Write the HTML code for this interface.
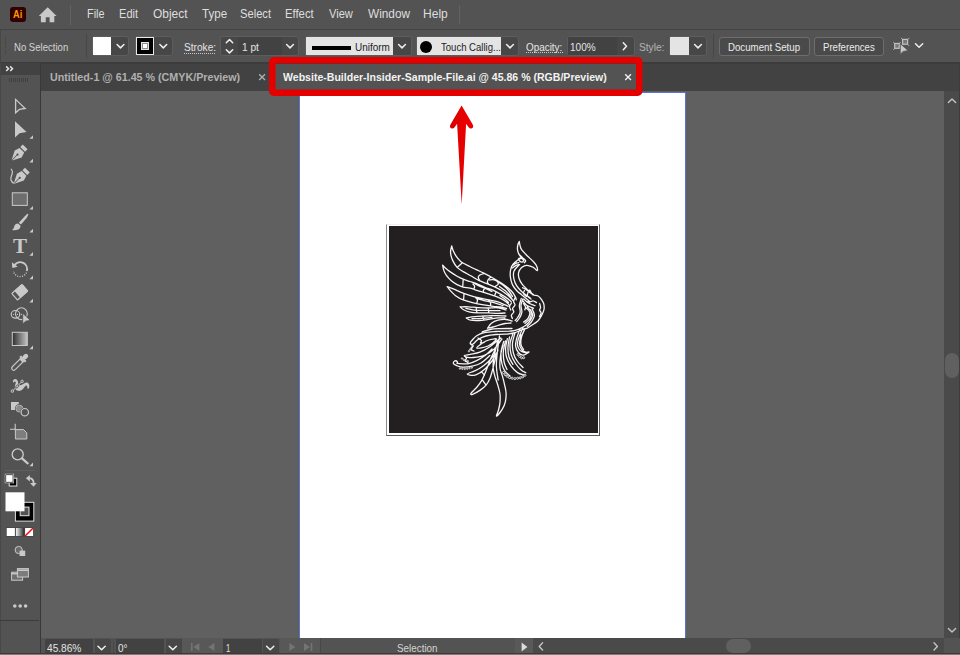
<!DOCTYPE html>
<html lang="en">
<head>
<meta charset="utf-8">
<title>Adobe Illustrator</title>
<style>
html,body{margin:0;padding:0;background:#535353;}
#app{position:relative;width:960px;height:655px;overflow:hidden;background:#535353;font-family:"Liberation Sans",sans-serif;}
#app div,#app svg{position:absolute;}
.t{position:absolute;white-space:pre;line-height:1;transform-origin:0 0;}
.b{box-sizing:border-box;}
</style>
</head>
<body>
<div id="app">
<!-- menu bar -->
<div style="left:0;top:0;width:960px;height:29px;background:#535353"></div>
<div style="left:0;top:29px;width:960px;height:1px;background:#444444"></div>
<!-- control bar -->
<div style="left:0;top:30px;width:960px;height:32px;background:#535353"></div>
<div style="left:0;top:30px;width:1px;height:32px;background:#474747"></div>
<div style="left:0;top:62px;width:960px;height:1.5px;background:#3c3c3c"></div>
<!-- tab strip -->
<div style="left:41px;top:63.5px;width:919px;height:27.5px;background:#424242"></div>
<!-- active tab -->
<div style="left:272px;top:63.5px;width:368px;height:27.5px;background:#535353"></div>
<!-- canvas -->
<div style="left:41px;top:91px;width:903px;height:547px;background:#606060"></div>
<!-- artboard -->
<div style="left:298.5px;top:92px;width:387.5px;height:546px;background:#5675cf"></div>
<div style="left:299.5px;top:93px;width:385.5px;height:545px;background:#ffffff"></div>
<!-- toolbar -->
<div style="left:0;top:63px;width:40px;height:590px;background:#535353"></div>
<div style="left:0;top:63px;width:40px;height:11.5px;background:#424242"></div>
<div style="left:39.5px;top:63px;width:1.5px;height:590px;background:#383838"></div>
<div style="left:0;top:63px;width:1px;height:590px;background:#484848"></div>
<div style="left:0;top:620px;width:39px;height:1px;background:#3c3c3c"></div>
<div style="left:5px;top:470px;width:30px;height:1px;background:#5f5f5f"></div>
<!-- v scrollbar -->
<div style="left:944px;top:91px;width:15px;height:547px;background:#4a4a4a"></div>
<div style="left:959px;top:63px;width:1px;height:592px;background:#3c3c3c"></div>
<div style="left:944.5px;top:353px;width:14.5px;height:25px;border-radius:7px;background:#606060"></div>
<!-- status bar -->
<div style="left:41px;top:638px;width:919px;height:15px;background:#535353"></div>
<div style="left:533px;top:638px;width:411px;height:15px;background:#4a4a4a"></div>
<div style="left:726px;top:638.5px;width:25px;height:14.5px;border-radius:7px;background:#606060"></div>
<div style="left:0;top:653px;width:960px;height:1px;background:#3a3a3a"></div>
<div style="left:0;top:654px;width:960px;height:1px;background:#7c7c7c"></div>
<!-- ===== menu bar icons ===== -->
<div style="left:10px;top:7px;width:15.5px;height:15px;border-radius:3px;background:#330000;z-index:0"></div>
<svg style="left:38px;top:6px" width="20" height="18" viewBox="38 6 20 18"><path d="M47.7 7.2 L56.6 16.1 L54.3 16.1 L54.3 22.3 L49.6 22.3 L49.6 17.2 L45.8 17.2 L45.8 22.3 L40.9 22.3 L40.9 16.1 L38.8 16.1 Z" fill="#c9c9c9"/></svg>
<div style="left:70px;top:5px;width:1px;height:19.5px;background:#626262"></div>
<div style="left:459px;top:5px;width:1px;height:19px;background:#626262"></div>

<!-- ===== control bar ===== -->
<!-- gripper -->
<svg style="left:4px;top:36px" width="4" height="20" viewBox="0 0 4 20"><path d="M1.5 1v18" stroke="#3f3f3f" stroke-width="1" stroke-dasharray="1 1"/></svg>
<div style="left:86px;top:34px;width:1px;height:24px;background:#474747"></div>
<div style="left:713px;top:34px;width:1px;height:24px;background:#474747"></div>

<!-- fill widget -->
<div class="b" style="left:92px;top:36px;width:37px;height:20px;border:1px solid #5d5d5d;border-radius:3px;background:#474747"></div>
<div style="left:93px;top:37px;width:18px;height:18px;background:#ffffff"></div>
<!-- stroke widget -->
<div class="b" style="left:135px;top:36px;width:38px;height:20px;border:1px solid #5d5d5d;border-radius:3px;background:#474747"></div>
<div class="b" style="left:136px;top:37px;width:18px;height:18px;background:#000;border:1px solid #e8e8e8"></div>
<div class="b" style="left:141px;top:42.4px;width:8px;height:7.8px;background:#8e8e8e;border:1px solid #e2e2e2"></div>
<div style="left:143px;top:44.4px;width:4px;height:3.8px;background:#ffffff"></div>
<!-- stroke weight -->
<div class="b" style="left:220px;top:36px;width:79px;height:20px;border:1px solid #5d5d5d;border-radius:3px;background:#474747"></div>
<div style="left:238px;top:37px;width:43.5px;height:18px;background:#424242"></div>
<!-- uniform -->
<div class="b" style="left:304.5px;top:36px;width:107px;height:20px;border:1px solid #5d5d5d;border-radius:3px;background:#474747"></div>
<div style="left:305.5px;top:37px;width:87.5px;height:18px;background:#e4e4e4"></div>
<div style="left:312px;top:45.5px;width:38.6px;height:4px;background:#000"></div>
<!-- brush -->
<div class="b" style="left:416px;top:36px;width:103px;height:20px;border:1px solid #5d5d5d;border-radius:3px;background:#474747"></div>
<div style="left:417px;top:37px;width:84px;height:18px;background:#e4e4e4"></div>
<div style="left:420px;top:40.5px;width:12px;height:12px;border-radius:6px;background:#000"></div>
<!-- opacity -->
<div class="b" style="left:567px;top:36px;width:67.5px;height:20px;border:1px solid #5d5d5d;border-radius:3px;background:#474747"></div>
<div style="left:568px;top:37px;width:48.5px;height:18px;background:#424242"></div>
<!-- style -->
<div class="b" style="left:669px;top:36px;width:38px;height:20px;border:1px solid #5d5d5d;border-radius:3px;background:#474747"></div>
<div style="left:670px;top:37px;width:19px;height:18px;background:#e4e4e4"></div>
<!-- buttons -->
<div class="b" style="left:718.5px;top:36.5px;width:91px;height:19.5px;border:1px solid #6d6d6d;border-radius:3px;background:#4a4a4a"></div>
<div class="b" style="left:814px;top:36.5px;width:69.5px;height:19.5px;border:1px solid #6d6d6d;border-radius:3px;background:#4a4a4a"></div>
<!-- dotted underlines -->
<svg style="left:183px;top:52px" width="34" height="3" viewBox="0 0 34 3"><path d="M1 1.5h31" stroke="#c8c8c8" stroke-width="1" stroke-dasharray="1 1"/></svg>
<svg style="left:525px;top:51px" width="40" height="3" viewBox="0 0 40 3"><path d="M1 1.5h37" stroke="#c8c8c8" stroke-width="1" stroke-dasharray="1 1"/></svg>

<!-- chevrons (control bar) -->
<svg style="left:0;top:30px" width="960" height="32" viewBox="0 30 960 32" fill="none" stroke="#f0f0f0" stroke-width="1.5" stroke-linecap="round" stroke-linejoin="round">
<path d="M117.1 44.55l3.4 3.3 3.4-3.3"/>
<path d="M159.9 44.55l3.4 3.3 3.4-3.3"/>
<path d="M226.3 42.7l3.2-3.2 3.2 3.2"/>
<path d="M226.3 49.7l3.2 3.2 3.2-3.2"/>
<path d="M286.6 44.55l3.4 3.3 3.4-3.3"/>
<path d="M398.6 44.55l3.4 3.3 3.4-3.3"/>
<path d="M506.6 44.55l3.4 3.3 3.4-3.3"/>
<path d="M623.3 42.7l3.2 3.5-3.2 3.500"/>
<path d="M694.6 44.55l3.4 3.3 3.4-3.3"/>
<path d="M915.5 43.800l3.600 3.400 3.600-3.400"/>
</svg>
<!-- ===== left toolbar ===== -->
<svg style="left:0;top:62px" width="40" height="560" viewBox="0 62 40 560">
<g fill="none" stroke="#e6e6e6" stroke-width="1.5" stroke-linejoin="miter">
<path d="M6.2 66.4l2.3 2.3-2.3 2.3M10.2 66.4l2.3 2.3-2.3 2.3"/>
</g>
<path d="M9 80h20" stroke="#414141" stroke-width="4" stroke-dasharray="1 1"/>
<g fill="#c9c9c9">
<!-- flyout triangles -->
<path d="M33 135.2v3.6h-3.6zM33 158.8v3.6h-3.6zM33 206v3.6h-3.6zM33 228.8v3.6h-3.6zM33 252.1v3.6h-3.6zM33 275.6v3.6h-3.6zM33 298.8v3.6h-3.6zM33 345.6v3.6h-3.6zM33 462.6v3.6h-3.6z"/>
</g>
<!-- 1 selection -->
<path d="M15.6 99.4V112.7L19.4 109.4L25.2 108.5Z" fill="none" stroke="#c9c9c9" stroke-width="1.3" stroke-linejoin="miter"/>
<!-- 2 direct selection -->
<path d="M15 121.2V137.5L19.6 133.3L26.6 132Z" fill="#c9c9c9"/>
<!-- 3 pen -->
<g transform="translate(19.1 153) rotate(45)" fill="#c9c9c9">
<path d="M-3.4 -8.6h6.8v3.6h-6.8z"/>
<path d="M-3.3 -3.9h6.6l1.6 5.2L0.4 10.2V3.3a1.1 1.1 0 1 0 -0.8 0V10.2L-4.9 1.3Z"/>
</g>
<!-- 4 curvature -->
<g transform="translate(21.3 176.2) rotate(45)" fill="#c9c9c9">
<path d="M-3.4 -8.6h6.8v3.6h-6.8z"/>
<path d="M-3.3 -3.9h6.6l1.6 5.2L0.4 10.2V3.3a1.1 1.1 0 1 0 -0.8 0V10.2L-4.9 1.3Z"/>
</g>
<path d="M11.2 169.2c2.2 2.2 1.2 4.6 0.2 6.8c-1.2 2.8-0.6 6 2.6 7.2" fill="none" stroke="#c9c9c9" stroke-width="1.2" stroke-linecap="round"/>
<!-- 5 rectangle -->
<rect x="12.3" y="192.8" width="15" height="12.6" fill="#6e6e6e" stroke="#c9c9c9" stroke-width="1"/>
<!-- 6 brush -->
<path d="M28.2 213.8c0.5 0.6-0.6 2.6-1.6 4.1l-5.6 6.7l-2.2-1.8l6-6.5c1.3-1.4 2.8-3 3.4-2.5z" fill="#c9c9c9"/>
<path d="M18 223.6l2.3 1.9c0.6 1.6-0.3 3.3-2 4c-2 0.9-4.6 0.9-6.4 0.4c1.7-0.6 1.9-1.9 2.3-3.3c0.5-1.8 1.9-3 3.8-3z" fill="#c9c9c9"/>
<!-- 8 rotate -->
<path d="M14.6 265A6.9 6.9 0 0 1 26.8 271" fill="none" stroke="#c9c9c9" stroke-width="1.8"/>
<path d="M11.9 262.2l0.4 5.7l5.4-1.2z" fill="#c9c9c9"/>
<path d="M26.4 272.6A6.9 6.9 0 0 1 13.4 271.2" fill="none" stroke="#c9c9c9" stroke-width="1.4" stroke-dasharray="1 1.4"/>
<!-- 9 eraser -->
<g transform="translate(19.7 292.3) rotate(-41.5)">
<rect x="-6.8" y="-4.3" width="13.6" height="8.6" rx="0.8" fill="none" stroke="#c9c9c9" stroke-width="1.2"/>
<rect x="-3.1" y="-4.9" width="10.5" height="9.8" rx="0.8" fill="#c9c9c9"/>
</g>
<!-- 10 shape builder -->
<ellipse cx="15.5" cy="314.3" rx="4.3" ry="3.8" fill="none" stroke="#c9c9c9" stroke-width="1.1"/>
<circle cx="21.4" cy="313.7" r="5.9" fill="none" stroke="#c9c9c9" stroke-width="1.1"/>
<path d="M13 314.4h9.4" stroke="#c9c9c9" stroke-width="1" stroke-dasharray="1 1"/>
<path d="M22.7 313.2V324L25.7 321.2L30.4 320.4Z" fill="#c9c9c9" stroke="#535353" stroke-width="0.9"/>
<!-- 11 gradient -->
<defs><linearGradient id="gr1" x1="0" x2="1" y1="0" y2="0"><stop offset="0" stop-color="#2e2e2e"/><stop offset="1" stop-color="#c4c4c4"/></linearGradient>
<linearGradient id="gr2" x1="0" x2="1" y1="0" y2="0"><stop offset="0" stop-color="#f4f4f4"/><stop offset="1" stop-color="#2c2c2c"/></linearGradient></defs>
<rect x="12.3" y="332.3" width="15" height="13.2" fill="url(#gr1)" stroke="#c9c9c9" stroke-width="1"/>
<!-- 12 eyedropper -->
<g transform="translate(19.8 362.2) rotate(45)">
<path d="M-2.1 -2.4h4.2v10.6c0 1.4-0.9 2.3-2.1 2.3s-2.1-0.9-2.1-2.3z" fill="#535353" stroke="#c9c9c9" stroke-width="1.1"/>
<path d="M-3.9 -5.6h7.8v2.3h-7.8z" fill="#c9c9c9"/>
<path d="M-2.6 -3.6h5.2v1.6h-5.2z" fill="#c9c9c9"/>
<rect x="-2.3" y="-10.9" width="4.6" height="6" rx="2.2" fill="#c9c9c9"/>
</g>
<!-- 13 puppet warp -->
<path d="M13 382.4C12.6 380.4 13.8 379 15.2 379C16.8 379 17.8 380.4 18 382.2C18.2 383.8 18.6 384.8 19.4 385.2C21 385.6 22.8 384.2 24.4 383.2C26 382.2 28.2 382.4 29 384.2C29.6 385.8 29.2 387.6 28.6 388.8C28 388.9 27.4 388.6 27.2 388C27.6 386.8 27.2 385.6 26.2 385.6C25 385.8 24.4 387.4 23.4 388.6C22 390.4 20 391.2 18.2 390.8C16.4 390.4 15 389.2 14.8 387.4C14.6 385.6 15.8 384 15.8 382.6C15.8 381.6 15 381.2 14.4 381.8C14 382.2 13.6 382.6 13 382.4Z" fill="#c9c9c9"/>
<path d="M13.2 390.3L21.3 382.2" stroke="#535353" stroke-width="1.5"/>
<path d="M13.2 390.3L21.3 382.2" stroke="#d6d6d6" stroke-width="0.9"/>
<ellipse cx="17.2" cy="386.5" rx="1.7" ry="1.1" transform="rotate(-45 17.2 386.5)" fill="#c9c9c9" stroke="#535353" stroke-width="0.8"/>
<circle cx="12.4" cy="391.1" r="1.3" fill="#6a6a6a" stroke="#c9c9c9" stroke-width="0.9"/>
<circle cx="22.1" cy="381.4" r="1.3" fill="#6a6a6a" stroke="#c9c9c9" stroke-width="0.9"/>
<!-- 14 blend -->
<rect x="11" y="402" width="7.8" height="8" fill="#c9c9c9"/>
<circle cx="19.4" cy="408.6" r="4.5" fill="#535353"/>
<circle cx="19.4" cy="408.6" r="3.5" fill="#8a8a8a" stroke="#b8b8b8" stroke-width="0.8"/>
<circle cx="24.8" cy="412.2" r="4.7" fill="#535353"/>
<circle cx="24.8" cy="412.2" r="3.7" fill="#535353" stroke="#c9c9c9" stroke-width="1.2"/>
<!-- 15 artboard -->
<path d="M15.2 423.8v6.5M10 429.2h6" stroke="#c9c9c9" stroke-width="1.1" fill="none"/>
<path d="M15.4 429.6h8.2l3.2 3.2v6.2H15.4z" fill="#7e7e7e" stroke="#c9c9c9" stroke-width="1"/>
<!-- 16 zoom -->
<circle cx="17.7" cy="454.4" r="5.5" fill="none" stroke="#c9c9c9" stroke-width="1.4"/>
<path d="M22 458.4l5.7 4.9" stroke="#c9c9c9" stroke-width="2.2" stroke-linecap="round"/>
<!-- default fill/stroke -->
<rect x="9.2" y="478.2" width="7.6" height="7.8" fill="#000" stroke="#e4e4e4" stroke-width="1"/>
<rect x="11.6" y="480.6" width="2.8" height="3" fill="#535353" stroke="#000" stroke-width="0.8"/>
<rect x="5.6" y="474.6" width="7.6" height="7.8" fill="#fff" stroke="#000" stroke-width="1"/>
<rect x="5.1" y="474.1" width="8.6" height="8.8" fill="none" stroke="#d0d0d0" stroke-width="0.7"/>
<!-- swap arrow -->
<path d="M28.6 478.2c3 0 5 1.6 5 5" fill="none" stroke="#c9c9c9" stroke-width="1.8"/>
<path d="M25.9 478.3l3.9-3.3v6.6z" fill="#c9c9c9"/>
<path d="M33.5 486.8l-3.4-3.9h6.6z" fill="#c9c9c9"/>
<!-- fill / stroke big -->
<rect x="15.4" y="502.3" width="18.4" height="18.8" fill="#000" stroke="#e0e0e0" stroke-width="1"/>
<rect x="20.2" y="507.1" width="8.8" height="8.6" fill="#535353" stroke="#e0e0e0" stroke-width="1"/>
<rect x="5.5" y="492.3" width="19" height="19" fill="#fff"/>
<!-- color / gradient / none -->
<rect x="6" y="527.4" width="27.6" height="9.2" fill="#424242"/>
<rect x="6.7" y="528" width="8.2" height="8" fill="#fff"/>
<rect x="15.9" y="528" width="8.2" height="8" fill="url(#gr2)"/>
<rect x="25.1" y="528" width="8" height="8" fill="#fff"/>
<path d="M25.1 536L33.1 528" stroke="#ee1111" stroke-width="1.6"/>
<!-- draw mode -->
<circle cx="18.7" cy="550" r="3.6" fill="#6a6a6a" stroke="#c9c9c9" stroke-width="1"/>
<rect x="19.6" y="550.6" width="5.6" height="5.4" fill="#c9c9c9"/>
<!-- screen mode -->
<rect x="11.6" y="572.2" width="11" height="8" fill="#6e6e6e" stroke="#c9c9c9" stroke-width="1"/>
<path d="M11.6 573.7h11" stroke="#c9c9c9" stroke-width="1.4"/>
<rect x="17.4" y="568.6" width="11" height="8.4" fill="#7c7c7c" stroke="#c9c9c9" stroke-width="1"/>
<path d="M17.4 570.2h11" stroke="#c9c9c9" stroke-width="1.6"/>
<!-- dots -->
<circle cx="14.8" cy="606" r="1.8" fill="#c9c9c9"/><circle cx="20.2" cy="606" r="1.8" fill="#c9c9c9"/><circle cx="25.6" cy="606" r="1.8" fill="#c9c9c9"/>
</svg>
<!-- ===== status bar ===== -->
<div style="left:45px;top:639px;width:48px;height:14px;background:#424242;border-radius:2px 0 0 0"></div>
<div style="left:95px;top:639px;width:15.5px;height:14px;background:#474747"></div>
<div style="left:113px;top:639px;width:1px;height:14px;background:#484848"></div>
<div style="left:116px;top:639px;width:48px;height:14px;background:#424242"></div>
<div style="left:166px;top:639px;width:15.5px;height:14px;background:#474747"></div>
<div style="left:182px;top:638px;width:41px;height:15px;background:#585858"></div>
<div style="left:223px;top:639px;width:38.5px;height:14px;background:#424242"></div>
<div style="left:263px;top:639px;width:16px;height:14px;background:#474747"></div>
<div style="left:280px;top:638px;width:40px;height:15px;background:#585858"></div>
<div style="left:320px;top:638px;width:1px;height:15px;background:#484848"></div>
<div style="left:515px;top:638px;width:18px;height:15px;background:#595959"></div>
<div style="left:944px;top:638px;width:15px;height:15px;background:#535353"></div>
<svg style="left:41px;top:638px" width="919" height="15" viewBox="41 638 919 15">
<g fill="none" stroke="#f0f0f0" stroke-width="1.5" stroke-linecap="round" stroke-linejoin="round">
<path d="M98 646.2l3.6 3.5 3.6-3.5"/>
<path d="M169.2 646.2l3.6 3.5 3.6-3.5"/>
<path d="M266.6 646.2l3.6 3.5 3.6-3.5"/>
</g>
<g fill="#747474">
<path d="M191 643h1.6v8H191zM199.4 643v8l-6-4z"/>
<path d="M214.4 643v8l-6-4z"/>
<path d="M289.4 643v8l6-4z"/>
<path d="M304 643v8l6-4zM310.7 643h1.6v8h-1.6z"/>
</g>
<path d="M521.6 642.6v8.8l5.8-4.4z" fill="#dcdcdc"/>
<g fill="none" stroke="#c4c4c4" stroke-width="1.4" stroke-linecap="round" stroke-linejoin="round">
<path d="M542.6 642.8l-3.4 3.6 3.4 3.6"/>
<path d="M934 642.8l3.4 3.6-3.4 3.6"/>
</g>
</svg>
<!-- v scroll arrows -->
<svg style="left:944px;top:92px" width="15" height="546" viewBox="944 92 15 546" fill="none" stroke="#c4c4c4" stroke-width="1.4" stroke-linecap="round" stroke-linejoin="round">
<path d="M948.4 102.4l3.6-3.5 3.6 3.5"/>
<path d="M948.4 628.4l3.6 3.5 3.6-3.5"/>
</svg>
<!-- tab close buttons -->
<svg style="left:255px;top:70px" width="380" height="14" viewBox="255 70 380 14" fill="none" stroke-width="1.3">
<path d="M259.2 74.2l5.8 5.8M265 74.2l-5.8 5.8" stroke="#b0b0b0"/>
<path d="M625.2 74.2l5.8 5.8M631 74.2l-5.8 5.8" stroke="#f2f2f2"/>
</svg>
<!-- arrange icon -->
<svg style="left:890px;top:36px" width="22" height="20" viewBox="890 36 22 20">
<g stroke="#b4b4b4" stroke-width="0.9" fill="none">
<path d="M893.2 42l1.600 1.600M900.600 42l-1.400 1.600M893.200 50l1.600-1.600"/>
<path d="M900.900 37.800l1.600 1.600M909.400 37.800l-1.600 1.600M909.400 46.200l-1.600-1.600"/>
</g>
<g fill="#787878" stroke="#c2c2c2" stroke-width="1.2">
<rect x="894.7" y="43.500" width="4.600" height="4.800"/>
<rect x="902.600" y="39.400" width="5" height="4.800"/>
</g>
<path d="M900.300 43.800v10.400l2.900-2.800 4.800-0.800z" fill="#c9c9c9" stroke="#535353" stroke-width="0.7"/>
</svg>
<span class="t" style="left:86.63px;top:8.31px;font-size:12.5px;color:#dedede;transform:scaleX(0.8684)">File</span>
<span class="t" style="left:118.51px;top:8.31px;font-size:12.5px;color:#dedede;transform:scaleX(0.8857)">Edit</span>
<span class="t" style="left:152.54px;top:8.31px;font-size:12.5px;color:#dedede;transform:scaleX(0.9571)">Object</span>
<span class="t" style="left:202.00px;top:8.31px;font-size:12.5px;color:#dedede;transform:scaleX(0.9259)">Type</span>
<span class="t" style="left:239.71px;top:8.31px;font-size:12.5px;color:#dedede;transform:scaleX(0.8941)">Select</span>
<span class="t" style="left:285.10px;top:8.31px;font-size:12.5px;color:#dedede;transform:scaleX(0.9032)">Effect</span>
<span class="t" style="left:329.00px;top:8.31px;font-size:12.5px;color:#dedede;transform:scaleX(0.8889)">View</span>
<span class="t" style="left:367.50px;top:8.31px;font-size:12.5px;color:#dedede;transform:scaleX(0.9444)">Window</span>
<span class="t" style="left:423.44px;top:8.31px;font-size:12.5px;color:#dedede;transform:scaleX(0.9625)">Help</span>
<span class="t" style="left:14.13px;top:42.20px;font-size:11px;color:#d4d4d4;transform:scaleX(0.8689)">No Selection</span>
<span class="t" style="left:183.68px;top:42.20px;font-size:11px;color:#e4e4e4;transform:scaleX(0.9212)">Stroke:</span>
<span class="t" style="left:241.88px;top:42.20px;font-size:11px;color:#e4e4e4;transform:scaleX(0.9235)">1 pt</span>
<span class="t" style="left:354.59px;top:42.20px;font-size:11px;color:#1c1c1c;transform:scaleX(0.9054)">Uniform</span>
<span class="t" style="left:441.00px;top:42.20px;font-size:11px;color:#1c1c1c;transform:scaleX(0.8676)">Touch Callig...</span>
<span class="t" style="left:526.00px;top:41.70px;font-size:11px;color:#e4e4e4;transform:scaleX(0.9000)">Opacity:</span>
<span class="t" style="left:570.09px;top:42.20px;font-size:11px;color:#e4e4e4;transform:scaleX(0.9111)">100%</span>
<span class="t" style="left:639.08px;top:42.20px;font-size:11px;color:#b4b4b4;transform:scaleX(0.9231)">Style:</span>
<span class="t" style="left:727.92px;top:42.20px;font-size:11px;color:#ececec;transform:scaleX(0.8790)">Document Setup</span>
<span class="t" style="left:822.93px;top:42.20px;font-size:11px;color:#ececec;transform:scaleX(0.8724)">Preferences</span>
<span class="t" style="left:50.28px;top:72.03px;font-size:10.5px;color:#b0b0b0;transform:scaleX(1.0200);font-weight:700">Untitled-1 @ 61.45 % (CMYK/Preview)</span>
<span class="t" style="left:282.50px;top:72.03px;font-size:10.5px;color:#f2f2f2;transform:scaleX(1.0047);font-weight:700">Website-Builder-Insider-Sample-File.ai @ 45.86 % (RGB/Preview)</span>
<span class="t" style="left:46.90px;top:643.40px;font-size:11px;color:#e4e4e4;transform:scaleX(0.9216)">45.86%</span>
<span class="t" style="left:118.00px;top:643.40px;font-size:11px;color:#e4e4e4;transform:scaleX(0.9000)">0°</span>
<span class="t" style="left:225.80px;top:643.40px;font-size:11px;color:#e4e4e4;transform:scaleX(0.7000)">1</span>
<span class="t" style="left:396.90px;top:643.40px;font-size:11px;color:#d4d4d4;transform:scaleX(0.8955)">Selection</span>
<span class="t" style="left:12.90px;top:235.80px;font-size:20.8px;color:#c9c9c9;transform:scaleX(1.0143);font-weight:700;font-family:'Liberation Serif',serif">T</span>
<span class="t" style="left:12.70px;top:9.03px;font-size:10.5px;color:#ff9a00;transform:scaleX(0.8800);font-weight:700">Ai</span>
<!-- ===== artwork ===== -->
<div class="b" style="left:386.300px;top:223.500px;width:213.900px;height:212.400px;border:1px solid #8a8a8a;border-right-color:#5a5a5a;border-bottom-color:#5a5a5a;border-top-color:#f0f0f0;background:#fff"></div>
<div style="left:389px;top:226px;width:209px;height:207px;background:#231f20"></div>
<!--PHX-->
<svg style="left:389px;top:226px" width="209" height="207" viewBox="389 226 209 207">
<path d="M519.3 241.5C519.4 242.3 519.8 244.7 520.2 246.1C520.6 247.5 520.5 248.1 521.6 249.7C522.8 251.3 525.1 253.7 527.1 255.7C529.1 257.7 531.9 259.9 533.5 261.7C535.1 263.4 536.1 264.7 536.7 266.2C537.3 267.7 537.7 270.2 537.3 270.6C536.9 271.0 535.4 269.0 534.5 268.3C533.6 267.6 533.1 267.2 531.7 266.7C530.3 266.2 527.9 265.1 526.2 265.3C524.5 265.5 522.9 266.4 521.6 267.6C520.3 268.8 519.0 270.9 518.6 272.7C518.2 274.5 518.4 276.2 519.0 278.2C519.6 280.2 521.0 282.6 522.5 284.6C524.0 286.6 526.2 288.4 528.0 290.1C529.8 291.8 532.6 293.9 533.5 294.7 M519.3 241.5C519.0 242.1 518.1 243.6 517.8 245.0C517.5 246.4 517.3 248.2 517.5 249.7C517.7 251.2 518.1 252.5 518.8 253.9C519.5 255.3 521.1 257.3 521.6 258.0 M521.6 258.0C520.9 258.4 519.0 259.2 517.5 260.3C516.0 261.4 514.0 262.8 512.9 264.4C511.8 266.0 511.0 267.8 510.6 269.9C510.2 272.0 510.1 274.8 510.4 277.2C510.7 279.6 511.3 282.3 512.4 284.6C513.5 286.9 515.5 289.3 517.0 291.0C518.5 292.7 519.4 292.9 521.6 294.7C523.8 296.5 528.6 300.5 530.0 301.7 M518.9 265.1C518.1 266.1 514.7 268.9 513.9 271.2C513.1 273.5 513.4 276.4 513.9 278.8C514.4 281.2 515.3 283.5 516.6 285.7C517.9 287.9 519.7 289.8 521.9 291.8C524.1 293.8 528.6 296.9 530.0 297.9 M518.6 258.6C518.9 258.2 520.7 258.1 521.5 258.4C522.3 258.7 523.5 259.8 523.6 260.4C523.7 261.0 522.6 262.0 522.0 262.1C521.4 262.2 520.3 261.6 519.7 261.0C519.1 260.4 518.3 259.0 518.6 258.6Z M511.5 266.2C512.1 265.8 513.8 264.2 515.0 263.6C516.2 263.0 518.2 262.8 518.8 262.6 M512.5 268.0C513.1 267.6 514.8 266.0 516.0 265.4C517.2 264.8 519.0 264.7 519.6 264.6 M519.0 254.3C519.6 254.9 521.4 256.5 522.5 257.6C523.6 258.7 525.3 259.8 525.6 260.7C525.9 261.6 524.5 262.4 524.3 262.8 M522.5 287.7C523.1 288.0 524.7 288.6 526.0 289.5C527.3 290.4 529.5 292.3 530.5 293.0C531.5 293.7 531.5 293.6 531.7 293.7 M524.5 290.5C524.3 291.0 523.2 292.5 523.5 293.5C523.8 294.5 526.0 296.0 526.5 296.5 M528.0 292.5C527.9 293.1 527.0 294.9 527.5 296.0C528.0 297.1 530.4 298.5 531.0 299.0 M529.7 290.0C530.2 290.8 531.3 293.6 532.7 294.6C534.1 295.6 536.8 295.3 538.1 296.0C539.5 296.7 539.9 297.5 540.8 298.7C541.7 299.9 543.0 301.8 543.6 303.3C544.2 304.8 544.2 306.5 544.2 307.9C544.2 309.2 543.8 310.2 543.4 311.4C543.0 312.6 542.6 313.6 541.7 315.2C540.8 316.8 539.8 319.0 538.1 320.7C536.4 322.4 533.5 324.1 531.7 325.3C529.9 326.5 527.9 327.6 527.1 328.1 M539.6 303.5C539.8 304.2 540.6 306.5 540.6 307.6C540.6 308.7 539.5 309.1 539.6 310.0C539.7 310.9 541.1 311.8 541.1 312.9C541.1 314.0 539.8 315.9 539.5 316.5 M521.3 298.4C521.0 299.5 519.6 303.0 519.4 305.3C519.2 307.6 520.4 310.2 520.2 312.1C520.0 314.1 518.8 315.6 518.0 317.0C517.2 318.4 515.7 319.9 515.2 320.5 M522.9 298.9C522.6 300.0 521.2 303.1 521.0 305.3C520.8 307.5 522.1 310.2 521.9 312.3C521.7 314.4 520.5 316.2 519.6 317.8C518.7 319.4 517.1 321.0 516.6 321.6 M525.9 307.6C526.5 308.4 529.3 310.3 529.7 312.1C530.1 313.9 529.2 316.5 528.2 318.2C527.2 319.9 524.4 321.5 523.6 322.1 M527.3 306.8C527.9 307.7 530.8 310.1 531.2 312.1C531.6 314.1 530.8 317.0 529.8 318.8C528.8 320.6 525.8 322.5 525.0 323.2 M530.5 309.8C530.9 310.7 532.8 313.3 532.7 315.2C532.6 317.1 530.8 319.6 529.7 321.3C528.6 323.0 526.5 324.5 525.9 325.1 M532.0 308.8C532.4 309.9 534.5 313.0 534.4 315.2C534.3 317.4 532.5 320.3 531.3 322.1C530.1 323.9 528.0 325.5 527.3 326.2 M522.8 300.7C523.4 301.5 524.8 304.0 526.6 305.3C528.4 306.6 532.4 307.8 533.5 308.3 M524.0 299.2C524.8 299.8 526.7 301.9 528.5 303.0C530.3 304.1 533.9 305.2 535.0 305.6 M523.5 303.5C523.8 304.1 525.3 305.9 525.5 307.0C525.7 308.1 524.9 309.3 524.8 309.8 M526.5 301.5C527.0 301.6 528.4 302.3 529.5 302.2C530.6 302.1 531.8 300.7 533.0 300.8C534.2 300.9 535.9 302.3 536.5 302.6 M451.7 246.0C452.0 246.8 452.5 249.3 453.3 251.0C454.1 252.7 455.2 254.7 456.3 256.3C457.4 257.9 459.1 259.8 460.1 260.9C461.1 262.0 461.0 262.0 462.4 262.8C463.8 263.6 466.2 264.8 468.5 265.9C470.8 267.0 473.6 268.5 476.2 269.7C478.8 270.9 481.0 271.7 483.8 273.1C486.6 274.5 490.1 276.4 492.9 278.0C495.7 279.6 497.9 280.9 500.5 282.6C503.1 284.3 506.2 286.4 508.2 288.0C510.2 289.6 511.4 290.9 512.7 292.5C514.0 294.1 515.2 296.7 515.8 297.9C516.4 299.1 516.1 299.5 516.2 299.8 M451.7 246.0C451.5 246.8 450.7 249.4 450.6 251.0C450.5 252.6 450.6 253.9 451.0 255.6C451.4 257.2 451.9 258.9 452.9 260.9C453.9 262.9 455.4 265.6 457.1 267.4C458.8 269.2 460.9 270.2 463.2 271.6C465.5 273.0 468.1 274.3 470.8 275.8C473.5 277.3 476.4 279.4 479.2 280.7C482.0 282.0 484.9 282.7 487.6 283.8C490.3 284.9 492.8 286.0 495.2 287.2C497.6 288.4 499.9 289.6 502.1 291.0C504.3 292.4 506.4 294.1 508.2 295.6C510.0 297.1 512.0 299.4 512.7 300.2 M462.4 262.8L457.1 267.4 M483.4 273.6C482.8 273.9 480.4 274.5 479.5 275.2C478.6 275.9 478.2 276.7 478.3 277.6C478.4 278.5 479.6 280.1 479.8 280.6 M490.6 277.3C490.2 277.7 488.7 278.8 488.2 279.6C487.7 280.4 487.4 281.3 487.4 282.0C487.4 282.7 488.2 283.5 488.4 283.8 M489.8 280.0C490.3 279.9 491.9 279.4 493.0 279.6C494.1 279.8 495.8 280.4 496.7 281.1C497.6 281.9 498.4 283.2 498.2 284.1C497.9 285.0 495.7 286.0 495.2 286.4 M498.5 282.2C499.4 282.8 502.2 284.5 504.0 286.0C505.8 287.5 507.6 289.2 509.0 291.0C510.4 292.8 511.9 295.6 512.5 296.5 M499.5 286.5C500.4 287.2 503.3 289.1 505.0 290.5C506.7 291.9 508.3 293.6 509.5 295.0C510.7 296.4 511.6 298.3 512.0 299.0 M442.6 265.1C443.1 265.6 444.2 267.0 445.6 268.2C447.0 269.4 449.1 271.1 451.0 272.4C452.9 273.7 455.1 275.1 457.1 276.2C459.1 277.3 461.1 278.3 463.2 279.2C465.3 280.1 467.6 280.7 470.0 281.5C472.4 282.3 475.1 283.1 477.6 284.1C480.2 285.1 482.8 286.6 485.3 287.6C487.9 288.6 490.4 289.1 492.9 290.2C495.4 291.3 498.2 292.8 500.5 294.1C502.8 295.4 504.8 296.6 506.6 297.9C508.4 299.2 510.4 301.1 511.2 301.7 M442.6 265.1C442.8 265.9 443.1 268.4 443.7 270.1C444.3 271.8 445.2 273.7 446.4 275.4C447.6 277.1 449.2 278.9 451.0 280.4C452.8 281.9 455.1 283.5 457.1 284.6C459.1 285.7 460.9 286.4 463.0 287.0C465.1 287.6 467.6 287.6 470.0 288.2C472.4 288.8 475.1 289.8 477.6 290.6C480.2 291.4 482.8 292.0 485.3 292.8C487.9 293.6 490.4 294.5 492.9 295.4C495.4 296.3 498.3 297.3 500.5 298.4C502.7 299.4 504.5 300.6 505.9 301.7C507.3 302.8 508.4 304.2 508.9 304.7 M463.2 279.6L462.8 285.8 M473.0 284.0C473.3 284.4 474.5 285.4 474.6 286.3C474.7 287.2 473.9 288.6 473.8 289.1 M485.3 288.0C485.0 288.3 483.8 289.3 483.5 290.0C483.2 290.7 483.7 292.0 483.7 292.4 M496.0 292.0L494.5 296.0 M474.0 283.0C475.0 283.6 478.0 285.6 480.0 286.5C482.0 287.4 484.0 287.8 486.0 288.6C488.0 289.4 491.0 291.0 492.0 291.5 M500.0 295.5C500.8 296.1 503.6 297.8 505.0 299.0C506.4 300.2 507.9 301.9 508.5 302.5 M447.2 286.6C448.2 287.0 450.6 287.8 453.3 288.9C456.0 290.0 459.6 291.8 463.2 293.1C466.8 294.4 470.5 295.8 474.6 296.9C478.7 298.0 483.7 298.8 487.6 299.6C491.5 300.4 494.6 300.7 498.0 301.8C501.4 302.9 506.5 305.6 508.2 306.3 M447.2 286.6C447.7 287.2 448.8 288.9 450.2 290.4C451.6 291.9 453.4 294.1 455.6 295.7C457.8 297.3 460.4 298.8 463.2 299.9C466.0 301.0 469.0 301.8 472.4 302.6C475.8 303.4 480.4 304.3 483.8 304.9C487.2 305.5 490.2 306.0 493.0 306.4C495.8 306.8 498.2 306.6 500.5 307.0C502.8 307.4 505.6 308.3 506.6 308.6 M464.0 293.5L463.6 299.8 M475.4 297.3C475.7 297.7 477.1 298.9 477.4 299.8C477.6 300.7 477.0 302.3 476.9 302.8 M488.4 299.9C488.7 300.3 490.0 301.6 490.4 302.6C490.8 303.6 490.6 305.3 490.7 305.9 M477.0 298.6C478.3 299.0 482.2 300.1 485.0 300.8C487.8 301.5 491.0 301.8 494.0 302.6C497.0 303.4 501.5 305.1 503.0 305.6 M460.1 306.8C461.5 306.8 465.6 306.7 468.5 306.8C471.4 306.9 474.5 307.4 477.7 307.6C480.9 307.8 484.2 308.0 487.6 308.0C491.0 308.0 494.9 307.5 498.0 307.8C501.1 308.1 504.7 309.6 506.0 310.0 M460.1 306.8C460.6 307.2 461.5 308.6 463.2 309.5C464.9 310.4 467.4 311.6 470.1 312.2C472.8 312.8 476.1 312.8 479.2 312.9C482.2 313.0 485.3 312.8 488.4 312.9C491.5 313.0 495.2 313.3 498.0 313.3C500.8 313.3 503.8 313.1 505.0 313.0 M476.2 308.3L476.9 312.4 M488.4 308.3L488.8 312.7 M466.0 308.4C467.7 308.7 472.3 310.0 476.0 310.3C479.7 310.6 484.0 310.3 488.0 310.4C492.0 310.4 498.0 310.6 500.0 310.6 M466.2 317.9C467.6 317.7 471.7 317.0 474.6 316.7C477.5 316.4 481.0 316.2 483.8 316.0C486.6 315.8 489.0 315.7 491.4 315.6C493.8 315.5 495.6 315.5 498.0 315.6C500.4 315.7 504.7 315.9 506.0 316.0 M466.2 317.9C467.0 318.3 468.6 319.8 470.8 320.2C473.0 320.6 476.3 320.6 479.2 320.5C482.1 320.4 485.3 319.8 488.4 319.4C491.5 319.0 495.2 318.1 498.0 317.9C500.8 317.7 503.8 318.0 505.0 318.0 M483.0 317.1L483.8 320.2 M472.0 318.6C473.7 318.6 478.7 318.5 482.0 318.3C485.3 318.1 490.3 317.5 492.0 317.3 M487.6 328.2C488.2 327.4 489.7 324.5 491.4 323.2C493.1 321.9 495.6 320.8 498.0 320.2C500.4 319.6 503.7 319.4 506.0 319.5C508.3 319.6 511.0 320.8 512.0 321.0 M487.6 328.2C488.5 328.0 491.3 327.4 493.0 327.0C494.7 326.6 496.0 326.1 498.0 325.5C500.0 324.9 502.8 323.9 505.0 323.5C507.2 323.1 510.0 323.1 511.0 323.0 M515.2 297.6C514.9 298.2 513.6 300.3 513.6 301.5C513.6 302.7 515.2 303.8 515.0 305.0C514.8 306.2 512.8 307.3 512.6 308.5C512.4 309.7 514.0 310.9 513.8 312.0C513.6 313.1 511.6 314.1 511.4 315.2C511.2 316.3 512.2 317.9 512.4 318.5 M511.5 303.0C511.2 303.6 509.6 305.3 509.5 306.5C509.4 307.7 510.6 309.4 510.8 310.0 M510.0 331.2C507.6 331.2 500.1 331.2 495.8 331.5C491.5 331.8 487.6 332.0 484.4 332.7C481.2 333.4 478.8 334.4 476.7 335.7C474.6 337.0 473.2 339.1 472.1 340.3C471.0 341.5 470.3 342.3 470.2 343.0C470.1 343.7 470.9 344.6 471.5 344.6C472.1 344.6 472.9 344.1 474.0 343.2C475.1 342.3 476.0 340.7 478.0 339.5C480.0 338.3 483.0 336.8 486.0 336.0C489.0 335.2 492.3 334.8 496.0 334.5C499.7 334.2 506.0 334.1 508.0 334.0 M512.0 328.5C510.0 328.5 503.7 328.4 500.0 328.6C496.3 328.8 493.0 328.9 490.0 329.5C487.0 330.1 483.3 331.6 482.0 332.0 M494.3 338.8C492.6 339.0 488.9 339.5 486.0 341.0C483.1 342.5 476.4 347.2 476.7 348.0C477.0 348.8 484.8 347.3 488.0 346.0C491.2 344.7 494.9 341.2 496.0 340.0C497.1 338.8 496.0 338.6 494.3 338.8Z M500.8 337.9C499.0 339.4 493.3 344.3 489.8 346.7C486.3 349.1 483.2 350.9 479.9 352.2C476.6 353.5 472.6 353.8 470.0 354.4C467.4 354.9 465.1 355.1 464.5 355.5C463.9 355.9 464.9 356.7 466.4 357.0C467.9 357.3 470.3 357.8 473.3 357.5C476.3 357.2 480.8 356.7 484.3 355.3C487.8 353.9 491.3 351.6 494.2 348.9C497.1 346.2 500.6 340.6 501.9 339.0 M489.8 355.5C488.3 356.8 483.9 361.2 481.0 363.0C478.1 364.8 475.3 365.5 472.2 366.2C469.1 366.9 464.9 367.3 462.3 367.2C459.7 367.1 458.3 366.2 456.8 365.6C455.3 365.0 453.7 364.2 453.4 363.4C453.1 362.6 454.3 361.2 455.0 360.9C455.7 360.6 457.1 361.4 457.4 361.8C457.7 362.2 457.1 363.1 457.0 363.4 M457.9 363.4C459.5 363.5 464.7 364.3 467.8 363.8C470.9 363.3 473.7 362.0 476.6 360.6C479.5 359.2 482.8 357.1 485.4 355.2C488.0 353.2 490.9 349.9 492.0 348.9 M495.0 354.0C493.8 355.3 490.5 359.7 488.0 362.0C485.5 364.3 482.5 366.5 480.2 368.0C477.9 369.5 476.3 370.1 474.1 371.1C471.9 372.1 467.2 373.4 467.2 374.1C467.2 374.8 471.9 375.6 474.1 375.3C476.3 375.1 478.2 373.8 480.2 372.6C482.2 371.4 484.0 369.9 486.0 368.0C488.0 366.1 490.2 363.5 492.0 361.0C493.8 358.5 495.8 354.3 496.5 353.0 M496.0 348.0C495.2 349.7 492.5 354.7 491.0 358.0C489.5 361.3 488.3 365.1 487.1 368.0C485.9 370.9 485.0 373.3 484.0 375.6C483.0 377.9 482.3 379.7 481.0 381.7C479.7 383.7 478.1 385.9 476.4 387.8C474.7 389.7 471.6 392.1 471.0 393.2C470.4 394.3 471.1 394.8 472.6 394.3C474.1 393.8 477.9 391.7 480.2 390.1C482.5 388.5 484.6 386.8 486.3 384.8C488.0 382.8 489.1 380.3 490.1 377.9C491.1 375.5 491.6 373.3 492.4 370.3C493.2 367.3 494.1 363.4 495.0 360.0C495.9 356.6 497.5 351.7 498.0 350.0 M482.5 380.2L485.5 384.4 M481.7 371.8L484.4 375.2 M498.0 340.0C497.6 341.7 496.2 346.7 495.5 350.0C494.8 353.3 493.9 357.0 493.5 360.0C493.1 363.0 493.0 365.4 493.2 368.0C493.4 370.6 493.9 372.8 494.7 375.6C495.4 378.4 496.8 381.7 497.7 384.8C498.6 387.9 499.6 391.1 500.0 394.0C500.4 396.9 500.2 399.7 500.0 402.4C499.8 405.1 499.1 407.7 498.5 410.0C497.9 412.3 496.0 416.2 496.6 416.1C497.2 416.0 500.8 411.6 502.3 409.2C503.8 406.8 504.8 404.3 505.4 401.6C506.0 398.9 506.2 396.0 506.1 393.2C506.0 390.4 505.2 387.7 504.6 384.8C504.0 381.9 503.1 378.4 502.3 375.6C501.5 372.8 500.3 371.3 500.0 368.0C499.7 364.7 500.0 359.8 500.5 356.0C501.0 352.2 502.6 346.8 503.0 345.0 M499.5 336.0C499.1 338.8 497.8 347.5 497.3 352.5C496.8 357.5 496.2 361.6 496.4 366.2C496.5 370.8 497.9 377.7 498.2 380.0 M508.0 334.0C509.2 333.8 512.7 333.3 515.0 332.6C517.3 331.9 520.0 330.4 522.0 329.6C524.0 328.9 526.2 328.4 527.1 328.1 M510.0 331.2C511.0 331.0 514.1 330.8 516.0 330.2C517.9 329.6 519.9 328.6 521.5 327.8C523.1 327.0 524.8 326.0 525.5 325.6 M523.0 327.7C522.2 329.5 519.3 335.8 518.4 338.7C517.5 341.6 517.2 343.1 517.5 345.1C517.8 347.1 519.0 349.4 520.2 350.6C521.4 351.8 523.3 352.3 524.8 352.5C526.2 352.7 529.2 351.6 528.9 352.0C528.6 352.4 524.8 355.1 523.0 355.2C521.2 355.3 519.6 354.0 518.4 352.5C517.2 351.0 515.9 348.4 515.6 346.1C515.3 343.8 515.9 341.6 516.6 338.7C517.3 335.8 519.4 330.6 520.0 329.0 M521.0 335.0C520.8 336.5 519.3 341.5 519.5 344.0C519.7 346.5 520.8 348.6 522.0 350.0C523.2 351.4 525.8 352.2 526.5 352.6 M525.0 328.5C524.4 329.9 522.2 334.3 521.5 337.0C520.8 339.7 520.7 342.4 521.0 344.5C521.3 346.6 523.1 348.7 523.5 349.5 M512.9 334.2C512.4 335.7 510.4 339.9 510.1 343.3C509.8 346.7 510.2 350.9 511.1 354.3C512.0 357.7 513.9 360.9 515.6 363.5C517.3 366.1 519.4 368.4 521.1 369.9C522.8 371.4 524.9 372.2 525.7 372.6 M515.0 333.0C514.6 334.7 512.8 339.6 512.5 343.0C512.2 346.4 512.7 350.4 513.5 353.5C514.3 356.6 515.9 359.2 517.5 361.5C519.1 363.8 522.1 366.5 523.0 367.5 M507.4 338.7C507.1 340.2 505.8 344.8 505.6 347.9C505.5 350.9 505.6 353.9 506.5 357.0C507.4 360.1 509.3 363.6 511.1 366.2C512.9 368.8 515.4 371.1 517.5 372.6C519.6 374.1 522.9 374.6 524.0 375.0 M509.5 337.0C509.2 338.8 508.1 344.2 508.0 347.5C507.9 350.8 508.2 354.2 509.0 357.0C509.8 359.8 512.3 363.2 513.0 364.5 M503.7 341.5C503.2 343.3 501.3 348.8 501.0 352.5C500.7 356.2 501.3 360.4 501.9 363.5C502.5 366.6 503.3 368.7 504.7 370.8C506.1 372.9 509.1 375.1 510.0 376.0 M505.5 341.0C505.1 342.8 503.5 348.4 503.3 352.0C503.1 355.6 503.6 359.6 504.2 362.5C504.8 365.4 506.5 368.3 507.0 369.5 M470.2 343.0C470.6 343.6 472.4 345.4 472.5 346.5C472.6 347.6 470.8 348.8 471.0 349.5C471.2 350.2 473.5 350.8 474.0 351.0 M464.5 355.5C464.8 356.0 466.4 357.7 466.5 358.5C466.6 359.3 464.8 359.8 465.0 360.5C465.2 361.2 467.5 362.2 468.0 362.5 M478.0 338.0C478.6 338.4 481.1 339.7 481.5 340.5C481.9 341.3 480.1 342.7 480.5 343.0C480.9 343.3 483.4 342.6 484.0 342.5" fill="none" stroke="#f6f6f6" stroke-width="1.3" stroke-linecap="round" stroke-linejoin="round"/>
<g fill="none" stroke="#f2f2f2" stroke-width="0.85"><circle cx="503.5" cy="372.5" r="1.05"/><circle cx="505.2" cy="374.6" r="1.05"/><circle cx="507.2" cy="376.3" r="1.05"/><circle cx="509.6" cy="377.6" r="1.05"/><circle cx="512.2" cy="378.2" r="1.05"/><circle cx="514.9" cy="378.6" r="1.05"/><circle cx="517.6" cy="378.2" r="1.05"/><circle cx="520.2" cy="377.8" r="1.05"/><circle cx="522.7" cy="376.8" r="1.05"/><circle cx="524.9" cy="375.3" r="1.05"/><circle cx="518.0" cy="354.5" r="1.0"/><circle cx="519.6" cy="356.4" r="1.0"/><circle cx="521.6" cy="357.8" r="1.0"/><circle cx="523.7" cy="357.7" r="1.0"/><circle cx="473.0" cy="346.0" r="0.7"/><circle cx="471.6" cy="347.7" r="0.7"/><circle cx="470.2" cy="349.4" r="0.7"/><circle cx="468.9" cy="351.2" r="0.7"/><circle cx="462.0" cy="358.5" r="0.7"/><circle cx="463.7" cy="359.8" r="0.7"/><circle cx="465.6" cy="360.9" r="0.7"/><circle cx="467.8" cy="361.1" r="0.7"/><circle cx="460.0" cy="368.6" r="0.7"/><circle cx="462.4" cy="368.8" r="0.7"/><circle cx="464.8" cy="368.9" r="0.7"/><circle cx="467.2" cy="368.7" r="0.7"/><circle cx="469.5" cy="368.2" r="0.7"/><circle cx="471.8" cy="367.6" r="0.7"/><circle cx="513.5" cy="264.4" r="0.5"/><circle cx="514.8" cy="263.5" r="0.5"/><circle cx="516.2" cy="262.7" r="0.5"/></g>
</svg>
<!-- ===== red annotation ===== -->
<svg style="left:260px;top:50px" width="400" height="165" viewBox="260 50 400 165">
<defs><linearGradient id="ag" x1="0" x2="1" y1="0" y2="0"><stop offset="0" stop-color="#d40000"/><stop offset="0.5" stop-color="#e60000"/><stop offset="1" stop-color="#ec0000"/></linearGradient></defs>
<rect x="272.25" y="60.25" width="367" height="32.5" rx="1.5" fill="none" stroke="#e50000" stroke-width="6.5" stroke-linejoin="round"/>
<path d="M461.6 105.400L472.700 124.600C473.900 126.700 473 128.400 471.300 128.600C470.200 128.700 469.400 128.100 468.600 127.200L466.100 123.800L461.700 204.500L457.100 123.800L454.600 127.200C453.800 128.100 453 128.700 451.900 128.600C450.200 128.400 449.300 126.700 450.500 124.600Z" fill="url(#ag)"/>
</svg>

</div>
</body>
</html>
